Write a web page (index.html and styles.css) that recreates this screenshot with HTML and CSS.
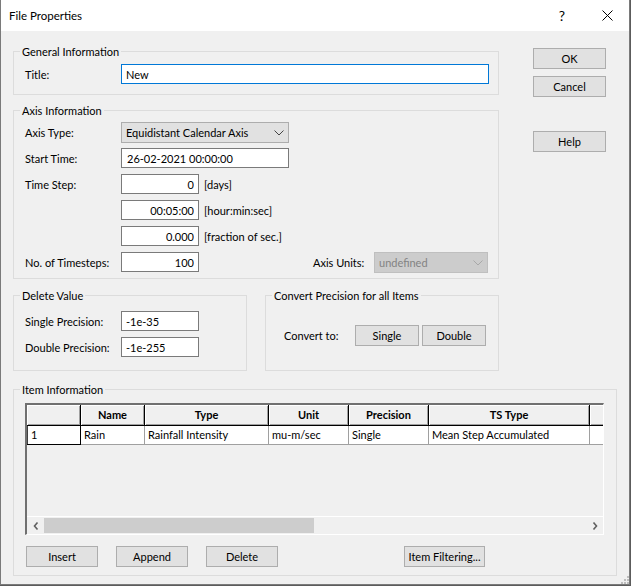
FILE: index.html
```html
<!DOCTYPE html>
<html lang="en">
  <head>
    <meta charset="UTF-8" />
    <title>File Properties</title>
    <link rel="stylesheet" href="styles.css">
  </head>
  <body>
    <div class="window">
      <div class="titlebar">
        <span class="caption">File Properties</span>
        <span class="qmark">?</span>
        <svg class="close" width="11" height="11" viewBox="0 0 11 11">
          <path d="M0.5 0.5 L10.5 10.5 M10.5 0.5 L0.5 10.5" stroke="#000" stroke-width="1" fill="none" />
        </svg>
      </div>

      <div class="client">
        <div class="top">
          <div class="left">
            <fieldset class="group general">
              <legend>General Information</legend>
              <div class="inner">
                <div class="row">
                  <span class="lbl">Title:</span>
                  <input class="field focus wide" type="text" value="New" />
                </div>
              </div>
            </fieldset>

            <fieldset class="group axis">
              <legend>Axis Information</legend>
              <div class="inner">
                <div class="row">
                  <span class="lbl">Axis Type:</span>
                  <div class="select">
                    <span>Equidistant Calendar Axis</span>
                    <svg width="10" height="6" viewBox="0 0 10 6"><polyline points="0.5,0.5 5,5 9.5,0.5" fill="none" stroke="#444" /></svg>
                  </div>
                </div>
                <div class="row">
                  <span class="lbl">Start Time:</span>
                  <input class="field mid" type="text" value="26-02-2021 00:00:00" />
                </div>
                <div class="row">
                  <span class="lbl">Time Step:</span>
                  <input class="field short num" type="text" value="0" />
                  <span class="unit">[days]</span>
                </div>
                <div class="row">
                  <span class="lbl"></span>
                  <input class="field short num" type="text" value="00:05:00" />
                  <span class="unit">[hour:min:sec]</span>
                </div>
                <div class="row">
                  <span class="lbl"></span>
                  <input class="field short num" type="text" value="0.000" />
                  <span class="unit">[fraction of sec.]</span>
                </div>
                <div class="row">
                  <span class="lbl">No. of Timesteps:</span>
                  <input class="field short num" type="text" value="100" />
                  <span class="units-lbl">Axis Units:</span>
                  <div class="select disabled">
                    <span>undefined</span>
                    <svg width="10" height="6" viewBox="0 0 10 6"><polyline points="0.5,0.5 5,5 9.5,0.5" fill="none" stroke="#a8a8a8" /></svg>
                  </div>
                </div>
              </div>
            </fieldset>

            <div class="pair">
              <fieldset class="group delete">
                <legend>Delete Value</legend>
                <div class="inner">
                  <div class="row">
                    <span class="lbl">Single Precision:</span>
                    <input class="field short" type="text" value="-1e-35" />
                  </div>
                  <div class="row">
                    <span class="lbl">Double Precision:</span>
                    <input class="field short" type="text" value="-1e-255" />
                  </div>
                </div>
              </fieldset>
              <fieldset class="group convert">
                <legend>Convert Precision for all Items</legend>
                <div class="inner convert-row">
                  <span class="convert-lbl">Convert to:</span>
                  <button class="btn small">Single</button>
                  <button class="btn small">Double</button>
                </div>
              </fieldset>
            </div>
          </div>

          <div class="side">
            <button class="btn side-btn">OK</button>
            <button class="btn side-btn">Cancel</button>
            <button class="btn side-btn help">Help</button>
          </div>
        </div>

        <fieldset class="group items">
          <legend>Item Information</legend>
          <div class="inner">
            <div class="grid">
              <div class="cells">
                <div class="hcell"></div>
                <div class="hcell">Name</div>
                <div class="hcell">Type</div>
                <div class="hcell">Unit</div>
                <div class="hcell">Precision</div>
                <div class="hcell">TS Type</div>
                <div class="hcell"></div>

                <div class="rowhead">1</div>
                <div class="cell">Rain</div>
                <div class="cell">Rainfall Intensity</div>
                <div class="cell">mu-m/sec</div>
                <div class="cell">Single</div>
                <div class="cell">Mean Step Accumulated</div>
                <div class="cell"></div>
              </div>
              <div class="hscroll">
                <div class="arrow">
                  <svg width="6" height="8" viewBox="0 0 6 8"><polyline points="4.5,0.5 1.5,4 4.5,7.5" fill="none" stroke="#606060" stroke-width="1.6" /></svg>
                </div>
                <div class="thumb"></div>
                <div class="track"></div>
                <div class="arrow">
                  <svg width="6" height="8" viewBox="0 0 6 8"><polyline points="1.5,0.5 4.5,4 1.5,7.5" fill="none" stroke="#606060" stroke-width="1.6" /></svg>
                </div>
              </div>
            </div>
            <div class="actions">
              <button class="btn act">Insert</button>
              <button class="btn act">Append</button>
              <button class="btn act">Delete</button>
              <button class="btn act filter">Item Filtering...</button>
            </div>
          </div>
        </fieldset>

        <svg class="grip" width="9" height="9" viewBox="0 0 9 9">
          <rect x="7" y="1" width="2" height="2" fill="#bdbdbd" />
          <rect x="4" y="4" width="2" height="2" fill="#bdbdbd" />
          <rect x="7" y="4" width="2" height="2" fill="#bdbdbd" />
          <rect x="1" y="7" width="2" height="2" fill="#bdbdbd" />
          <rect x="4" y="7" width="2" height="2" fill="#bdbdbd" />
          <rect x="7" y="7" width="2" height="2" fill="#bdbdbd" />
        </svg>
      </div>
    </div>
  </body>
</html>
```

FILE: styles.css
```css
body {
  margin: 0;
  background: #5c5c5c;
  font-family: Lato, "Liberation Sans", sans-serif;
  font-size: 11px;
  color: #000;
}
.window {
  width: 628px;
  height: 584px;
  border: 1px solid #7a7a7a;
  border-top: none;
  background: #f0f0f0;
  display: flex;
  flex-direction: column;
}
.titlebar {
  height: 31px;
  background: #fff;
  display: flex;
  align-items: center;
  padding-left: 8px;
  font-size: 11.5px;
}
.qmark {
  margin-left: auto;
  font-size: 14px;
}
.close {
  margin-left: 37px;
  margin-right: 16px;
}
.client {
  flex: 1;
  padding: 0 12px;
  position: relative;
}
.top {
  display: flex;
}
.left {
  width: 486px;
}
.side {
  width: 73px;
  margin-left: 34px;
  padding-top: 17px;
  display: flex;
  flex-direction: column;
}

/* buttons */
.btn {
  box-sizing: border-box;
  height: 21px;
  margin: 0;
  padding: 0;
  background: #e1e1e1;
  border: 1px solid #adadad;
  font: inherit;
  color: #000;
}
.side .side-btn {
  margin-bottom: 7px;
}
.side .help {
  margin-top: 27px;
}
.convert .small {
  width: 64px;
  margin-right: 3px;
}
.actions .act {
  width: 72px;
  margin-right: 18px;
}
.actions .filter {
  width: 81px;
  margin-left: 108px;
}

/* group boxes */
.group {
  margin: 0;
  padding: 0;
  min-width: 0;
  border: 1px solid #dcdcdc;
}
.group legend {
  margin-left: 6px;
  padding: 0 2px;
  line-height: 15px;
}
.general {
  margin-top: 13px;
}
.general .inner {
  padding: 5px 9px 10px 11px;
}
.axis {
  margin-top: 8px;
}
.axis .inner {
  padding: 4px 10px 6px 11px;
}
.row {
  display: flex;
  align-items: center;
  height: 20px;
  margin-bottom: 6px;
}
.row:last-child {
  margin-bottom: 0;
}
.lbl {
  width: 96px;
  flex-shrink: 0;
}
.field {
  box-sizing: border-box;
  height: 20px;
  margin: 0;
  padding: 0 4px;
  border: 1px solid #7a7a7a;
  background: #fff;
  font: inherit;
  color: #000;
  outline: none;
}
.field.focus {
  border-color: #0078d7;
}
.wide {
  flex: 1;
}
.mid {
  width: 168px;
  padding-left: 5px;
}
.short {
  width: 78px;
}
.num {
  text-align: right;
}
.unit {
  margin-left: 5px;
}
.select {
  box-sizing: border-box;
  width: 168px;
  height: 21px;
  align-self: flex-start;
  display: flex;
  align-items: center;
  justify-content: space-between;
  padding: 0 4px;
  background: #e1e1e1;
  border: 1px solid #adadad;
}
.select.disabled {
  width: 114px;
  margin-left: auto;
  background: #cccccc;
  border-color: #bfbfbf;
  color: #838383;
}
.units-lbl {
  margin-left: 114px;
}

/* delete / convert */
.pair {
  display: flex;
  gap: 18px;
  margin-top: 9px;
}
.delete,
.convert {
  width: 234px;
  box-sizing: border-box;
}
.delete .inner {
  padding: 8px 0 13px 11px;
}
.convert-row {
  display: flex;
  align-items: center;
  padding: 22px 0 0 18px;
}
.convert-lbl {
  width: 71px;
}

/* item information */
.items {
  margin-top: 11px;
}
.items .inner {
  padding: 6px 12px 8px 11px;
}
.grid {
  height: 132px;
  box-sizing: border-box;
  border-top: 2px solid #707070;
  border-left: 2px solid #707070;
  border-right: 1px solid #fff;
  border-bottom: 1px solid #fff;
  display: flex;
  flex-direction: column;
}
.cells {
  flex: 1;
  overflow: hidden;
  display: grid;
  grid-template-columns: 54px 64px 124px 80px 80px 161px 40px;
  grid-template-rows: 21px 19px;
}
.hcell {
  box-sizing: border-box;
  background: #f0f0f0;
  border-right: 1px solid #000;
  border-bottom: 1px solid #000;
  box-shadow: inset 1px 1px 0 #fff, inset -1px -1px 0 #a0a0a0;
  font-weight: bold;
  text-align: center;
  line-height: 20px;
}
.rowhead,
.cell {
  box-sizing: border-box;
  background: #fff;
  line-height: 18px;
  padding-left: 3px;
  white-space: nowrap;
}
.rowhead {
  border-right: 1px solid #000;
  border-bottom: 1px solid #000;
  box-shadow: inset 1px 0 0 #404040;
  padding-left: 4px;
}
.cell {
  border-right: 1px solid #a0a0a0;
  border-bottom: 1px solid #a0a0a0;
}
.hscroll {
  height: 17px;
  border-top: 1px solid #fff;
  display: flex;
}
.arrow {
  width: 17px;
  display: flex;
  align-items: center;
  justify-content: center;
}
.thumb {
  width: 270px;
  margin: 1px 0;
  background: #cdcdcd;
}
.track {
  flex: 1;
}
.actions {
  display: flex;
  margin-top: 11px;
  padding-left: 1px;
}
.grip {
  position: absolute;
  right: 0;
  bottom: 0;
}
```
